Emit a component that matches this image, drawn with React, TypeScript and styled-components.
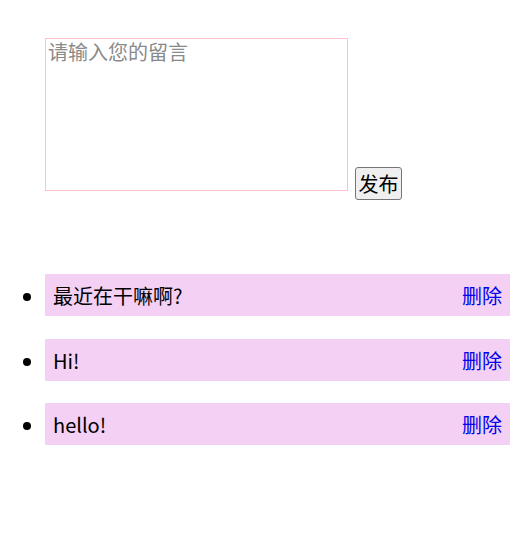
import styled, { createGlobalStyle } from 'styled-components';

const GlobalStyle = createGlobalStyle`
  body {
    margin: 0;
    background: #fff;
    font-family: "Noto Sans CJK SC", "Noto Sans", sans-serif;
  }
`;

const Page = styled.div`
  padding: 38px 0 0 5px;
`;

const Editor = styled.div`
  padding-left: 40px;
  display: flex;
  align-items: flex-end;
  gap: 7px;
`;

const Input = styled.textarea`
  box-sizing: border-box;
  width: 303px;
  height: 153px;
  border: 1px solid pink;
  padding: 1px 2px;
  font-size: 20px;
  line-height: 24px;
  font-family: "Noto Sans CJK SC", sans-serif;
  resize: none;
  outline: none;
  &::placeholder {
    color: #8a8a8a;
  }
`;

const PostButton = styled.button`
  box-sizing: border-box;
  height: 33px;
  width: 47px;
  padding: 0 2px;
  margin-bottom: -9px;
  font-size: 20px;
  line-height: 28px;
  font-family: "Noto Sans CJK SC", sans-serif;
  color: #000;
  background: #efefef;
  border: 1px solid #767676;
  border-radius: 3px;
`;

const List = styled.ul`
  margin: 83px 0 0;
  padding-left: 40px;
  width: 465px;
`;

const Item = styled.li`
  box-sizing: border-box;
  height: 42px;
  margin-bottom: 22.5px;
  padding: 0 8px;
  background: #f4d0f4;
  font-size: 20px;
  line-height: 42px;
`;

const Row = styled.div`
  display: flex;
  justify-content: space-between;
  align-items: center;
  height: 42px;
  padding-top: 2px;
  box-sizing: border-box;
`;

const Remove = styled.a`
  color: #0000ee;
  cursor: pointer;
`;

const messages = ['最近在干嘛啊?', 'Hi!', 'hello!'];

export default function App() {
  return (
    <Page>
      <GlobalStyle />
      <Editor>
        <Input placeholder="请输入您的留言" />
        <PostButton>发布</PostButton>
      </Editor>
      <List>
        {messages.map((msg, i) => (
          <Item key={i}>
            <Row>
              <span>{msg}</span>
              <Remove>删除</Remove>
            </Row>
          </Item>
        ))}
      </List>
    </Page>
  );
}
